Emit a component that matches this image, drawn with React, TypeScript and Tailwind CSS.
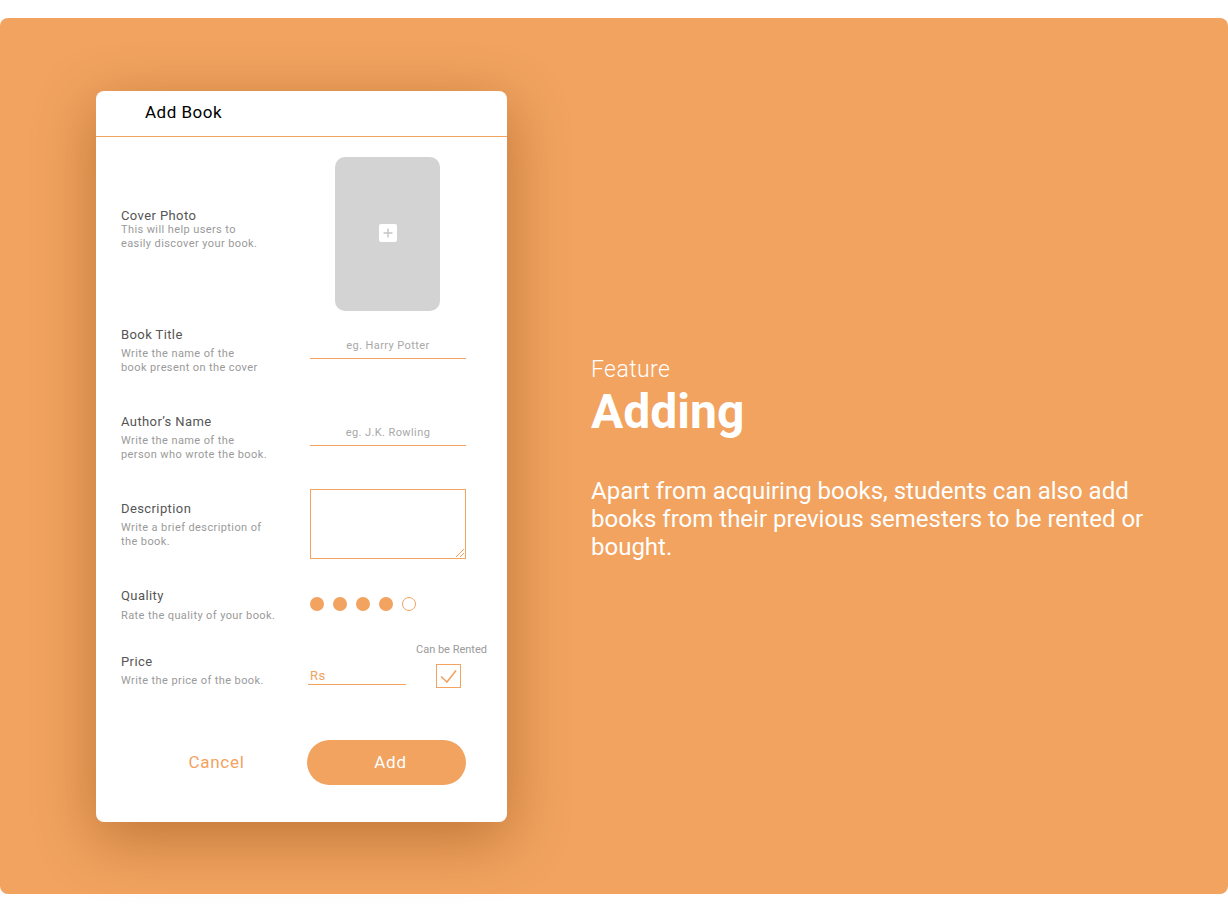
import React from 'react';

function FieldLabel({ title, lines }: { title: string; lines: string[] }) {
  return (
    <div>
      <p className="text-[13px] leading-4 tracking-[0.4px] text-[#555555]">{title}</p>
      <div className="mt-1 text-[11px] leading-[14px] tracking-[0.4px] text-[#9a9a9a]">
        {lines.map((l) => (
          <p key={l}>{l}</p>
        ))}
      </div>
    </div>
  );
}

function UnderlineInput({ placeholder }: { placeholder: string }) {
  return (
    <div className="mt-[12px] w-[156px] self-start border-b border-[#f1a35f] pb-[5px] text-center text-[11px] leading-[14px] tracking-[0.4px] text-[#a8a8a8]">
      {placeholder}
    </div>
  );
}

function AddBookCard() {
  return (
    <div className="ml-[96px] mt-[73px] h-[731px] w-[411px] shrink-0 rounded-lg bg-white shadow-[0_16px_60px_rgba(120,55,0,0.42)]">
      {/* Header */}
      <div className="flex h-[46px] items-center border-b border-[#f1a35f] pb-[2px] pl-[49px] text-[17px] tracking-[0.5px] text-black">
        Add Book
      </div>

      <div className="pl-[25px]">
        {/* Cover photo */}
        <div className="mt-[20px] flex h-[154px] items-center">
          <div className="mb-[9px] w-[189px]">
            <p className="text-[13px] leading-4 tracking-[0.4px] text-[#555555]">Cover Photo</p>
            <div className="-mt-px text-[11px] leading-[14px] tracking-[0.4px] text-[#9a9a9a]">
              <p>This will help users to</p>
              <p>easily discover your book.</p>
            </div>
          </div>
          <div className="ml-[25px] flex h-[154px] w-[105px] items-center justify-center rounded-[10px] bg-[#d3d3d3]">
            <div className="mb-[2px] flex h-[18px] w-[18px] items-center justify-center rounded-[2px] bg-white">
              <svg width="10" height="10" viewBox="0 0 10 10">
                <path d="M5 0.5v9M0.5 5h9" stroke="#c4c4c4" strokeWidth="1.4" />
              </svg>
            </div>
          </div>
        </div>

        {/* Book title */}
        <div className="mt-[16px] flex">
          <div className="w-[189px]">
            <FieldLabel title="Book Title" lines={['Write the name of the', 'book present on the cover']} />
          </div>
          <UnderlineInput placeholder="eg. Harry Potter" />
        </div>

        {/* Author */}
        <div className="mt-[39px] flex">
          <div className="w-[189px]">
            <FieldLabel title="Author’s Name" lines={['Write the name of the', 'person who wrote the book.']} />
          </div>
          <UnderlineInput placeholder="eg. J.K. Rowling" />
        </div>

        {/* Description */}
        <div className="mt-[27px] flex">
          <div className="w-[189px] pt-[12px]">
            <FieldLabel title="Description" lines={['Write a brief description of', 'the book.']} />
          </div>
          <div className="relative h-[70px] w-[156px] border border-[#f1a35f]">
            <svg className="absolute bottom-[1px] right-[1px]" width="9" height="9" viewBox="0 0 9 9">
              <path d="M9 1L1 9M9 5L5 9" stroke="#f1a35f" strokeWidth="1" />
            </svg>
          </div>
        </div>

        {/* Quality */}
        <div className="mt-[29px] flex">
          <div className="w-[189px]">
            <p className="text-[13px] leading-4 tracking-[0.4px] text-[#555555]">Quality</p>
            <p className="mt-[5px] text-[11px] leading-[14px] tracking-[0.4px] text-[#9a9a9a]">
              Rate the quality of your book.
            </p>
          </div>
          <div className="mt-[9px] flex gap-[9px] self-start">
            <span className="h-[14px] w-[14px] rounded-full bg-[#f1a35f]" />
            <span className="h-[14px] w-[14px] rounded-full bg-[#f1a35f]" />
            <span className="h-[14px] w-[14px] rounded-full bg-[#f1a35f]" />
            <span className="h-[14px] w-[14px] rounded-full bg-[#f1a35f]" />
            <span className="h-[14px] w-[14px] rounded-full border-[1.5px] border-[#f1a35f] bg-white" />
          </div>
        </div>

        {/* Price */}
        <div className="mt-[20px] flex">
          <div className="w-[187px] pt-[11px]">
            <FieldLabel title="Price" lines={['Write the price of the book.']} />
          </div>
          <div className="mt-[25px] h-[17px] w-[98px] self-start border-b border-[#f1a35f] pl-[2px] text-[13px] leading-4 tracking-[0.5px] text-[#f1a35f]">
            Rs
          </div>
          <div className="ml-[10px] flex w-[71px] flex-col items-center self-start">
            <p className="whitespace-nowrap text-[11px] leading-[14px] text-[#9a9a9a]">Can be Rented</p>
            <div className="mr-[6px] mt-[7px] flex h-[24px] w-[25px] items-center justify-center border border-[#f1a35f]">
              <svg width="17" height="14" viewBox="0 0 17 14">
                <path d="M1 7.5l6 5.5L16 1.5" fill="none" stroke="#f1a35f" strokeWidth="1.6" />
              </svg>
            </div>
          </div>
        </div>

        {/* Actions */}
        <div className="ml-[16px] mt-[52px] flex gap-[11px]">
          <button className="h-[45px] w-[159px] text-[17px] tracking-[0.7px] text-[#f1a35f]">Cancel</button>
          <button className="h-[45px] w-[159px] rounded-full bg-[#f1a35f] pl-[8px] text-[17px] tracking-[0.7px] text-white">
            Add
          </button>
        </div>
      </div>
    </div>
  );
}

export default function App() {
  return (
    <div className="min-h-[921px] w-full bg-white pt-[18px] font-['Roboto',sans-serif]">
      <div className="flex h-[876px] w-[1228px] rounded-lg bg-[#f1a35f]">
        <AddBookCard />
        <div className="ml-[84px] flex w-[570px] flex-col pt-[338px] text-white">
          <p className="text-[23px] font-light leading-7 tracking-[0.4px]">Feature</p>
          <h1 className="text-[48px] font-bold leading-[56px]">Adding</h1>
          <p className="mt-[37px] text-[24px] leading-7">
            Apart from acquiring books, students can also add books from their previous semesters to be rented or
            bought.
          </p>
        </div>
      </div>
    </div>
  );
}
